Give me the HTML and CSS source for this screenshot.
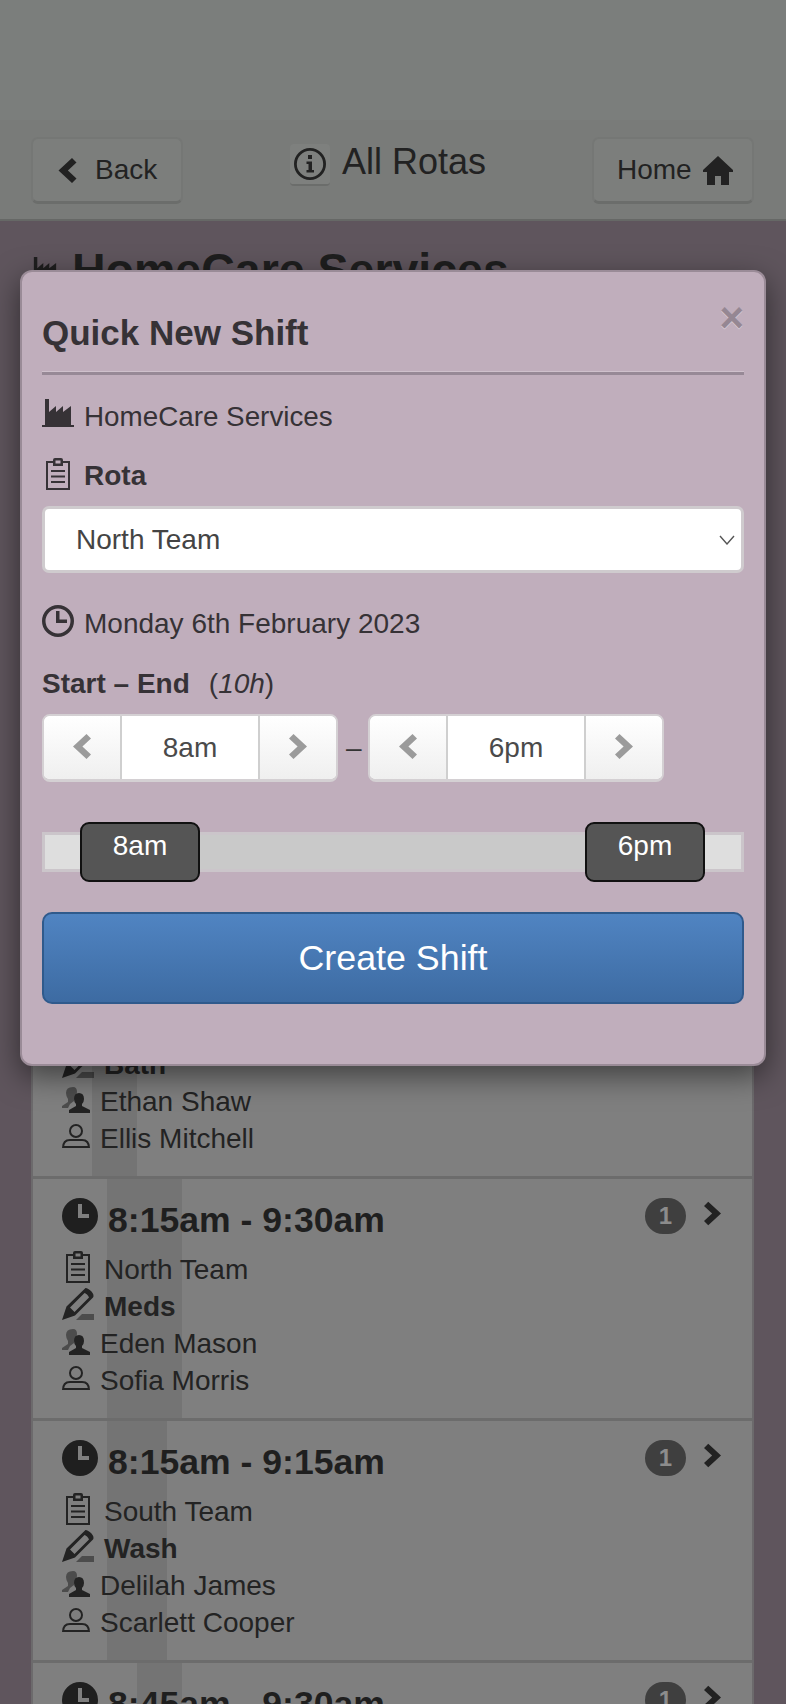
FILE: index.html
```html
<!DOCTYPE html>
<html lang="en">
<head>
<meta charset="utf-8">
<title>All Rotas</title>
<link rel="stylesheet" href="styles.css">
</head>
<body>
<svg class="sprite" width="0" height="0" aria-hidden="true">
  <symbol id="chev" viewBox="0 0 18 25"><path d="M0 4.500 4.500 0 18 12.500 4.500 25 0 20.500 8.600 12.500Z"/></symbol>
  <symbol id="home" viewBox="0 0 30 29"><path d="M15 0 30 14V16H26V29H18V20H12V29H4V16H0V14Z"/></symbol>
  <symbol id="info" viewBox="0 0 32 32"><path fill-rule="evenodd" d="M16 0A16 16 0 1 1 16 32 16 16 0 0 1 16 0ZM16 2.800A13.200 13.200 0 1 0 16 29.200 13.200 13.200 0 0 0 16 2.800ZM14 7H18V11H14ZM12.500 13.500H18V22H20V24.500H12.500V22H14.500V16H12.500Z"/></symbol>
  <symbol id="factory" viewBox="0 0 32 28"><path d="M3 0H7V13L14 7V13L21 7V13L29 7V26H32V28H0V26H3Z"/></symbol>
  <symbol id="clip" viewBox="0 0 24 32"><path fill-rule="evenodd" d="M0 3H7V2Q7 0 9 0H15Q17 0 17 2V3H24V32H0ZM2 5V30H22V5H17V8H7V5ZM9.500 2.500V5.500H14.500V2.500ZM5 12H19V14H5ZM5 17.500H19V19.500H5ZM5 23H19V25H5Z"/></symbol>
  <symbol id="clock-o" viewBox="0 0 32 32"><path fill-rule="evenodd" d="M16 0A16 16 0 1 1 16 32 16 16 0 0 1 16 0ZM16 3.500A12.500 12.500 0 1 0 16 28.500 12.500 12.500 0 0 0 16 3.500ZM14 6H17.500V14.500H25V18H14Z"/></symbol>
  <symbol id="clock-f" viewBox="0 0 36 36"><path fill-rule="evenodd" d="M18 0A18 18 0 1 1 18 36 18 18 0 0 1 18 0ZM16 6V20H27V16H20V6Z"/></symbol>
  <symbol id="pencil" viewBox="0 0 32 32"><path fill-rule="evenodd" d="M23.500 0Q26 0 29.500 3.500 32.500 7 31 9.500L13 27.500 0 32 4.500 18.500ZM22.500 5 8 19.500 12.500 24 27 9.500Q26.500 8 25 6.500Q23.500 5 22.500 5Z"/><path class="dim" d="M14 32 20 26H32V32Z"/></symbol>
  <symbol id="staff" viewBox="0 0 28 26"><path class="dim" d="M11 0Q15 0 15 5 15 9 12 12V14L8 17 6 21H0V19L6 15V12Q4 9 4 6 4 0 11 0Z"/><path d="M17 6Q22 6 22 12 22 15 20 17V19L28 23V26H7V23L14 19V17Q12 15 12 12 12 6 17 6Z"/></symbol>
  <symbol id="person" viewBox="0 0 28 24"><path fill-rule="evenodd" d="M14 0A7 7 0 1 1 14 14 7 7 0 0 1 14 0ZM14 2A5 5 0 1 0 14 12 5 5 0 0 0 14 2ZM8 15H20Q28 15 28 24H0Q0 15 8 15ZM8 17Q3 17 2.200 22H25.800Q25 17 20 17Z"/></symbol>
</svg>

<div class="band"></div>
<header class="topbar">
  <a class="tbtn back"><svg class="ic chev flip"><use href="#chev"/></svg><span>Back</span></a>
  <div class="title-wrap">
    <span class="info-btn"><svg class="ic info"><use href="#info"/></svg></span>
    <span class="page-title">All Rotas</span>
  </div>
  <a class="tbtn homebtn"><span>Home</span><svg class="ic homeic"><use href="#home"/></svg></a>
</header>

<main class="main">
  <h2 class="org"><svg class="ic orgic"><use href="#factory"/></svg>HomeCare Services</h2>
  <div class="list">
    <section class="row row-first">
      <span class="strip s1"></span>
      <div class="line task"><svg class="ic penci"><use href="#pencil"/></svg>Bath</div>
      <div class="line who"><svg class="ic staffi"><use href="#staff"/></svg>Ethan Shaw</div>
      <div class="line who"><svg class="ic personi"><use href="#person"/></svg>Ellis Mitchell</div>
    </section>
    <section class="row">
      <span class="strip s2"></span>
      <div class="row-head">
        <div class="time"><svg class="ic clockf"><use href="#clock-f"/></svg>8:15am - 9:30am</div>
        <div class="row-right"><span class="badge">1</span><svg class="ic rchev"><use href="#chev"/></svg></div>
      </div>
      <div class="line team"><svg class="ic clipi"><use href="#clip"/></svg>North Team</div>
      <div class="line task"><svg class="ic penci"><use href="#pencil"/></svg>Meds</div>
      <div class="line who"><svg class="ic staffi"><use href="#staff"/></svg>Eden Mason</div>
      <div class="line who"><svg class="ic personi"><use href="#person"/></svg>Sofia Morris</div>
    </section>
    <section class="row">
      <span class="strip s3"></span>
      <div class="row-head">
        <div class="time"><svg class="ic clockf"><use href="#clock-f"/></svg>8:15am - 9:15am</div>
        <div class="row-right"><span class="badge">1</span><svg class="ic rchev"><use href="#chev"/></svg></div>
      </div>
      <div class="line team"><svg class="ic clipi"><use href="#clip"/></svg>South Team</div>
      <div class="line task"><svg class="ic penci"><use href="#pencil"/></svg>Wash</div>
      <div class="line who"><svg class="ic staffi"><use href="#staff"/></svg>Delilah James</div>
      <div class="line who"><svg class="ic personi"><use href="#person"/></svg>Scarlett Cooper</div>
    </section>
    <section class="row row-last">
      <span class="strip s4"></span>
      <div class="row-head">
        <div class="time"><svg class="ic clockf"><use href="#clock-f"/></svg>8:45am - 9:30am</div>
        <div class="row-right"><span class="badge">1</span><svg class="ic rchev"><use href="#chev"/></svg></div>
      </div>
    </section>
  </div>
</main>

<div class="modal">
  <div class="modal-head">
    <h4 class="modal-title">Quick New Shift</h4>
    <span class="close">×</span>
  </div>
  <div class="info-line org-line"><svg class="ic mfact"><use href="#factory"/></svg>HomeCare Services</div>
  <div class="info-line rota-line"><svg class="ic mclip"><use href="#clip"/></svg><b>Rota</b></div>
  <div class="select">
    <span>North Team</span>
    <svg class="sel-chev" viewBox="0 0 16 10"><path d="M1 1 8 9 15 1" fill="none" stroke="currentColor" stroke-width="1.400"/></svg>
  </div>
  <div class="info-line date-line"><svg class="ic mclock"><use href="#clock-o"/></svg>Monday 6th February 2023</div>
  <div class="range-label"><b>Start – End</b><span class="dur">(<i>10h</i>)</span></div>
  <div class="steppers">
    <div class="stepper">
      <span class="step"><svg class="ic schev flip"><use href="#chev"/></svg></span>
      <span class="step-val">8am</span>
      <span class="step"><svg class="ic schev"><use href="#chev"/></svg></span>
    </div>
    <span class="dash">–</span>
    <div class="stepper">
      <span class="step"><svg class="ic schev flip"><use href="#chev"/></svg></span>
      <span class="step-val">6pm</span>
      <span class="step"><svg class="ic schev"><use href="#chev"/></svg></span>
    </div>
  </div>
  <div class="slider">
    <span class="s-end s-left"></span>
    <span class="handle">8am</span>
    <span class="s-mid"></span>
    <span class="handle">6pm</span>
    <span class="s-end s-right"></span>
  </div>
  <div class="create">Create Shift</div>
</div>
</body>
</html>
```
FILE: styles.css
```css
* { box-sizing: border-box; }
html, body { margin: 0; padding: 0; height: 1704px; overflow: hidden; }
body {
  width: 786px;
  position: relative;
  background: #5f555d;
  font-family: "Liberation Sans", Arial, sans-serif;
  font-size: 28px;
  color: #222;
}
.sprite { position: absolute; }
.ic { display: block; fill: currentColor; flex: none; }
.dim { opacity: .55; }
.flip { transform: scaleX(-1); }

.band { height: 120px; background: #7b7e7c; }
.topbar {
  height: 101px;
  background: #797b79;
  border-bottom: 2px solid #666866;
  display: flex;
  justify-content: space-between;
  padding: 17px 32px 0 31px;
  position: relative;
}
.tbtn {
  height: 67px;
  display: flex;
  align-items: center;
  border: 2px solid #757775;
  border-bottom-width: 3px;
  border-bottom-color: #6b6d6b;
  border-radius: 7px;
  background: #7c7e7c;
}
.back { width: 152px; padding-left: 25px; gap: 18px; }
.homebtn { width: 162px; padding-left: 23px; gap: 11px; }
.chev { width: 19px; height: 25px; }
.homeic { width: 30px; height: 29px; }
.title-wrap {
  position: absolute;
  left: 290px;
  top: 24px;
  display: flex;
  gap: 12px;
}
.info-btn {
  width: 40px;
  height: 42px;
  display: flex;
  align-items: center;
  justify-content: center;
  background: #7e807e;
  border-bottom: 2px solid #6b6d6b;
  border-radius: 4px;
}
.info { width: 32px; height: 32px; }
.page-title { font-size: 36px; line-height: 36px; }

.main { padding: 23px 31px 0; height: 1483px; overflow: hidden; }
.org {
  margin: 0;
  height: 693px;
  display: flex;
  align-items: flex-start;
  gap: 13px;
  font-size: 46.500px;
  line-height: 52px;
  font-weight: bold;
  color: #1e1e1e;
}
.orgic { width: 28px; height: 24px; margin-top: 13px; }

.list {
  background: #7f7f7f;
  border: 2px solid #6c6a6c;
  border-top: 0;
  width: 723px;
}
.row {
  position: relative;
  height: 242px;
  padding: 19px 31px 0 29px;
  border-bottom: 3px solid #6c6c6c;
}
.row-first { padding-top: 109px; }
.row > *:not(.strip) { position: relative; }
.strip { position: absolute; top: 0; bottom: 0; background: #747474; }
.s1 { left: 59px; width: 45px; }
.s2 { left: 74px; width: 75px; }
.s3 { left: 74px; width: 60px; }
.s4 { left: 104px; width: 45px; }
.row-head { display: flex; justify-content: space-between; height: 36px; margin-bottom: 17px; }
.time {
  display: flex;
  align-items: center;
  gap: 10px;
  font-size: 35.600px;
  font-weight: bold;
  line-height: 44px;
  height: 44px;
  color: #1f1f1f;
}
.clockf { width: 36px; height: 36px; margin-top: -9px; }
.row-right { display: flex; gap: 18px; }
.badge {
  width: 41px;
  height: 36px;
  border-radius: 18px;
  background: #3f3f3f;
  color: #8c8c8c;
  font-size: 24px;
  font-weight: bold;
  line-height: 36px;
  text-align: center;
}
.rchev { width: 17px; height: 25px; margin-top: 3px; }
.line { display: flex; align-items: center; height: 37px; line-height: 36px; color: #232323; white-space: nowrap; }
.team { gap: 14px; padding-left: 4px; }
.task { gap: 10px; font-weight: bold; }
.who { gap: 10px; }
.clipi { width: 24px; height: 32px; margin-top: -6px; }
.penci { width: 32px; height: 32px; margin-top: -6px; }
.staffi { width: 28px; height: 26px; margin-top: -4px; }
.personi { width: 28px; height: 24px; margin-top: -6px; }

.modal {
  position: absolute;
  left: 20px;
  top: 270px;
  width: 746px;
  height: 796px;
  padding: 0 20px;
  background: #c0aebc;
  border: 2px solid #9a8b97;
  border-radius: 12px;
  box-shadow: 0 10px 30px rgba(0, 0, 0, .5);
  color: #363236;
}
.modal-head {
  position: relative;
  height: 103px;
  border-bottom: 3px solid #978996;
  box-shadow: 0 -1px 0 #cfc1cc inset;
}
.modal-title {
  margin: 0;
  padding-top: 39px;
  font-size: 35px;
  line-height: 44px;
  font-weight: bold;
}
.close {
  position: absolute;
  right: 0;
  top: 25px;
  font-size: 42px;
  line-height: 42px;
  font-weight: bold;
  color: #958793;
  text-shadow: 0 1px 0 #d8cdd6;
}
.info-line { display: flex; align-items: center; line-height: 36px; white-space: nowrap; }
.org-line { gap: 10px; margin-top: 24px; height: 36px; font-size: 27.800px; }
.mfact { width: 32px; height: 28px; margin-top: -8px; }
.rota-line { gap: 14px; margin-top: 23px; height: 36px; padding-left: 4px; }
.mclip { width: 24px; height: 32px; margin-top: -4px; }
.select {
  margin: 12px 0 0;
  width: 100%;
  height: 67px;
  background: #fff;
  border: 3px solid #cfcbce;
  border-radius: 7px;
  display: flex;
  align-items: center;
  justify-content: space-between;
  padding: 0 6px 0 31px;
  color: #444;
}
.sel-chev { width: 16px; height: 10px; color: #555; }
.date-line { gap: 10px; margin-top: 33px; height: 36px; }
.mclock { width: 32px; height: 32px; margin-top: -6px; }
.range-label { margin-top: 24px; height: 36px; line-height: 36px; display: flex; gap: 19px; }
.dur i { font-style: italic; }
.steppers { margin-top: 12px; display: flex; align-items: center; gap: 8px; }
.stepper {
  display: flex;
  width: 296px;
  height: 68px;
  border: 2px solid #d4d0d3;
  border-bottom-width: 3px;
  border-radius: 8px;
  overflow: hidden;
  background: #fff;
}
.step {
  width: 76px;
  display: flex;
  align-items: center;
  justify-content: center;
  background: linear-gradient(#fff, #efefef);
  color: #9b9b9b;
}
.step-val {
  flex: 1;
  display: flex;
  align-items: center;
  justify-content: center;
  border-left: 2px solid #cfcfcf;
  border-right: 2px solid #cfcfcf;
  color: #4a4a4a;
}
.schev { width: 18px; height: 25px; margin-top: -2px; }
.dash { width: 14px; text-align: center; color: #333; }

.slider {
  margin-top: 40px;
  height: 60px;
  display: flex;
  align-items: center;
  width: 100%;
}
.s-end, .s-mid { height: 40px; background: #dedede; border: solid #cbc5ca; border-width: 3px 0; }
.s-left { width: 38px; border-left-width: 3px; }
.s-right { flex: 1; border-right-width: 3px; }
.s-mid { width: 385px; background: #c9c9c9; }
.handle {
  width: 120px;
  height: 60px;
  background: #555;
  border: 2px solid #111;
  border-radius: 9px;
  color: #fff;
  text-align: center;
  line-height: 44px;
}
.create {
  margin-top: 30px;
  width: 100%;
  height: 92px;
  border: 2px solid #2f5a8c;
  border-radius: 10px;
  background: linear-gradient(#5084c2, #3d6ba2);
  color: #fff;
  font-size: 35.800px;
  line-height: 88px;
  text-align: center;
}
```
